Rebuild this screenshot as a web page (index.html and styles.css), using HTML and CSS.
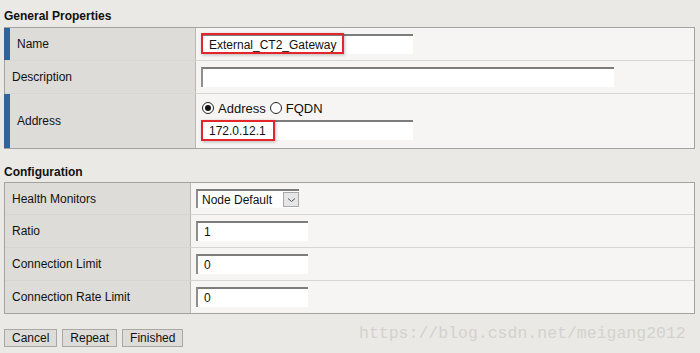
FILE: index.html
```html
<!DOCTYPE html>
<html lang="en">
<head>
  <meta charset="UTF-8" />
  <title>New Node</title>
  <link rel="stylesheet" href="styles.css">
</head>
<body>

<h3 class="section-title">General Properties</h3>
<div class="panel general">
  <div class="row row-name">
    <div class="label req">Name</div>
    <div class="value">
      <div class="field">
        <input type="text" class="text long" value="External_CT2_Gateway" />
        <span class="mark mark-name"></span>
      </div>
    </div>
  </div>
  <div class="row row-desc">
    <div class="label">Description</div>
    <div class="value">
      <input type="text" class="text wide" value="" />
    </div>
  </div>
  <div class="row row-addr">
    <div class="label req">Address</div>
    <div class="value stack">
      <div class="radios">
        <span class="radio checked"></span><span class="radio-text">Address</span>
        <span class="radio"></span><span class="radio-text">FQDN</span>
      </div>
      <div class="field">
        <input type="text" class="text long" value="172.0.12.1" />
        <span class="mark mark-addr"></span>
      </div>
    </div>
  </div>
</div>

<h3 class="section-title config-title">Configuration</h3>
<div class="panel config">
  <div class="row">
    <div class="label">Health Monitors</div>
    <div class="value">
      <div class="select">
        <span class="select-text">Node Default</span>
        <span class="select-btn">
          <svg width="9" height="6" viewBox="0 0 9 6"><path d="M1 1.5 L4.5 4.5 L8 1.5" fill="none" stroke="#555" stroke-width="1"/></svg>
        </span>
      </div>
    </div>
  </div>
  <div class="row">
    <div class="label">Ratio</div>
    <div class="value"><input type="text" class="text short" value="1" /></div>
  </div>
  <div class="row">
    <div class="label">Connection Limit</div>
    <div class="value"><input type="text" class="text short" value="0" /></div>
  </div>
  <div class="row">
    <div class="label">Connection Rate Limit</div>
    <div class="value"><input type="text" class="text short" value="0" /></div>
  </div>
</div>

<div class="buttons">
  <button class="btn">Cancel</button>
  <button class="btn">Repeat</button>
  <button class="btn">Finished</button>
</div>

<div class="watermark">https://blog.csdn.net/meigang2012</div>

</body>
</html>
```

FILE: styles.css
```css
body {
  margin: 0;
  padding: 0 5px 0 4px;
  background: #eae9e5;
  font-family: "Liberation Sans", Arial, sans-serif;
  font-size: 12px;
  color: #111;
  position: relative;
  height: 353px;
  box-sizing: border-box;
  overflow: hidden;
}

.section-title {
  margin: 0;
  padding-top: 9px;
  height: 18px;
  font-size: 12px;
  font-weight: bold;
  line-height: 14px;
}

.config-title {
  padding-top: 16px;
  height: 17px;
}

.panel {
  width: 691px;
  box-sizing: border-box;
  border: 1px solid #a2a2a0;
  background: #f6f5f3;
}

.row {
  display: flex;
  border-top: 1px solid #d6d5d1;
}

.row:first-child {
  border-top: none;
}

.row-name, .row-desc {
  height: 32px;
}

.row-addr {
  height: 54px;
}

.config .row {
  height: 32px;
}

.config .row:first-child {
  height: 31px;
}

.label {
  width: 191px;
  box-sizing: border-box;
  background: #dddcd8;
  border-right: 1px solid #b9b8b4;
  padding-left: 7px;
  display: flex;
  align-items: center;
}

.label.req {
  width: 192px;
  margin-left: -1px;
  border-left: 6px solid #31649a;
}

.config .label {
  width: 186px;
}

.value {
  flex: 1;
  padding-left: 5px;
  display: flex;
  align-items: center;
}

.value.stack {
  flex-direction: column;
  align-items: flex-start;
  justify-content: flex-start;
  padding-top: 7px;
}

.field {
  position: relative;
}

.text {
  display: block;
  box-sizing: border-box;
  height: 20px;
  margin: 0;
  padding: 0 0 0 6px;
  background: #fff;
  border: none;
  border-top: 2px solid #7c7c7c;
  border-left: 2px solid #8f8f8f;
  font-family: "Liberation Sans", Arial, sans-serif;
  font-size: 12px;
  color: #111;
  outline: none;
}

.text.long {
  width: 212px;
}

.text.wide {
  width: 413px;
}

.text.short {
  width: 112px;
}

.mark {
  position: absolute;
  top: 0;
  left: 0;
  height: 21px;
  border: 2px solid #e3262b;
  box-sizing: border-box;
  box-shadow: 1px 1px 3px rgba(0, 0, 0, 0.25);
}

.mark-name {
  width: 143px;
  top: -1px;
}

.mark-addr {
  width: 74px;
}

.radios {
  display: flex;
  align-items: center;
  height: 14px;
  margin-bottom: 5px;
  margin-left: 1px;
}

.radio {
  width: 12px;
  height: 12px;
  box-sizing: border-box;
  border: 1px solid #222;
  border-radius: 50%;
  background: #fff;
  position: relative;
}

.radio.checked::after {
  content: "";
  position: absolute;
  left: 2px;
  top: 2px;
  width: 6px;
  height: 6px;
  border-radius: 50%;
  background: #111;
}

.radio-text {
  margin-left: 4px;
  margin-right: 4px;
  font-size: 13px;
}

.select {
  display: flex;
  align-items: center;
  width: 103px;
  height: 19px;
  box-sizing: border-box;
  background: #fff;
  border-top: 2px solid #7c7c7c;
  border-left: 2px solid #8f8f8f;
}

.select-text {
  flex: 1;
  padding-left: 4px;
  font-size: 12px;
}

.select-btn {
  width: 16px;
  height: 15px;
  box-sizing: border-box;
  border: 1px solid #a8a8a8;
  background: #e6e6e6;
  display: flex;
  align-items: center;
  justify-content: center;
}

.buttons {
  display: flex;
  gap: 5px;
  margin-top: 15px;
}

.btn {
  height: 18px;
  padding: 0 7px;
  background: #dddcd8;
  border: 1px solid #a9a8a4;
  border-radius: 0;
  font-family: "Liberation Sans", Arial, sans-serif;
  font-size: 12px;
  color: #111;
  line-height: 16px;
}

.watermark {
  position: absolute;
  left: 359px;
  top: 324px;
  font-family: "Liberation Mono", monospace;
  font-size: 16.5px;
  color: #d3d2ce;
}
```
